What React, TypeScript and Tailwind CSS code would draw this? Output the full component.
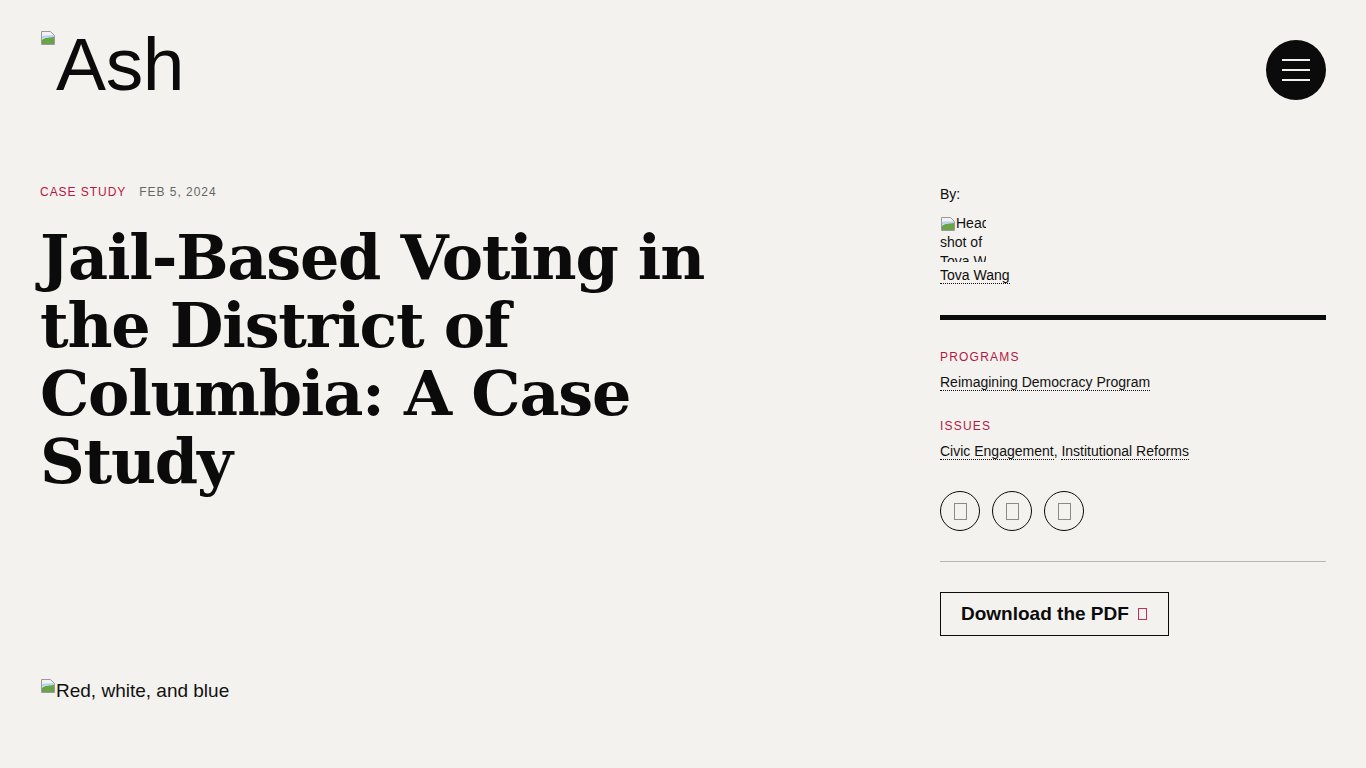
import React from 'react';

const sans = { fontFamily: '"Liberation Sans", Arial, sans-serif' };

function BrokenImg({ className = '' }: { className?: string }) {
  return (
    <svg width="16" height="16" viewBox="0 0 16 16" className={'inline-block shrink-0 ' + className}>
      <path d="M1.5 1.5h9l4 4v9h-13z" fill="#f2f2f2" stroke="#9a9a9a" />
      <path d="M2 10c3-3 6-2 12-4v8H2z" fill="#6ba34a" />
      <path d="M2 6c3-1 6 0 12-1v2c-5 1-9 0-12 2z" fill="#b8d4f0" />
    </svg>
  );
}

function Tofu({ className = '' }: { className?: string }) {
  return <span className={'inline-block border border-current ' + className} />;
}

function Meta({ label, children }: { label: string; children: React.ReactNode }) {
  return (
    <div>
      <div className="text-[12px] tracking-[0.1em] uppercase text-[#b5173f] leading-none">{label}</div>
      <div className="mt-[10px] text-[14px] text-[#111] leading-[18px]">{children}</div>
    </div>
  );
}

const link = 'border-b border-dotted border-[#111]';

export default function App() {
  return (
    <div className="min-h-screen bg-[#f4f2ef] text-[#0b0b0b]" style={sans}>
      <header className="flex items-start justify-between px-[40px] pt-[30px]">
        <div className="flex items-start">
          <BrokenImg />
          <span className="text-[75px] leading-[70px] tracking-[-0.005em] -mt-[1px]">Ash</span>
        </div>
        <button className="mt-[10px] w-[60px] h-[60px] rounded-full bg-[#0b0b0b] flex flex-col items-center justify-center gap-[8px]">
          <span className="block w-[28px] h-[2px] bg-[#f4f2ef]" />
          <span className="block w-[28px] h-[2px] bg-[#f4f2ef]" />
          <span className="block w-[28px] h-[2px] bg-[#f4f2ef]" />
        </button>
      </header>

      <main className="flex px-[40px] pt-[86px]">
        <div className="flex-1">
          <div className="flex items-center gap-[13px] text-[12px] tracking-[0.08em] leading-none">
            <span className="text-[#b5173f]">CASE STUDY</span>
            <span className="text-[#666]">FEB 5, 2024</span>
          </div>
          <h1
            className="mt-[26px] max-w-[700px] text-[62px] font-bold leading-[68px] tracking-[-0.02em]"
            style={{ fontFamily: '"DejaVu Serif", Georgia, serif' }}
          >
            Jail-Based Voting in the District of Columbia: A Case Study
          </h1>
        </div>

        <aside className="w-[386px] shrink-0">
          <div className="text-[14px] leading-none mt-[1px]">By:</div>
          <div className="mt-[13px] w-[46px] h-[48px] overflow-hidden text-[14px] leading-[19px] text-[#111]">
            <div className="whitespace-nowrap flex items-center">
              <BrokenImg />
              <span>Headshot</span>
            </div>
            <div className="whitespace-nowrap">shot of</div>
            <div className="whitespace-nowrap">Tova Wang</div>
          </div>
          <div className="mt-[4px] text-[14px] leading-[18px]">
            <span className={link}>Tova Wang</span>
          </div>

          <div className="mt-[31px] h-[5px] bg-[#0b0b0b]" />

          <div className="mt-[31px] flex flex-col gap-[29px]">
            <Meta label="Programs">
              <span className={link}>Reimagining Democracy Program</span>
            </Meta>
            <Meta label="Issues">
              <span className={link}>Civic Engagement</span>, <span className={link}>Institutional Reforms</span>
            </Meta>
          </div>

          <div className="mt-[31px] flex gap-[12px]">
            {[0, 1, 2].map(i => (
              <div key={i} className="w-[40px] h-[40px] rounded-full border border-[#0b0b0b] flex items-center justify-center">
                <Tofu className="text-[#8a8a8a] w-[13px] h-[17px]" />
              </div>
            ))}
          </div>

          <div className="mt-[30px] h-px bg-[#b8b6b3]" />

          <button className="mt-[30px] h-[44px] pl-[20px] pr-[21px] border border-[#0b0b0b] flex items-center gap-[9px] text-[19px] font-bold">
            Download the PDF
            <Tofu className="text-[#c0305a] w-[9px] h-[12px]" />
          </button>
        </aside>
      </main>

      <div className="px-[40px] mt-[42px] flex items-start text-[19px] leading-[22px] text-[#111]">
        <BrokenImg />
        <span className="mt-[2px]">Red, white, and blue</span>
      </div>
    </div>
  );
}
